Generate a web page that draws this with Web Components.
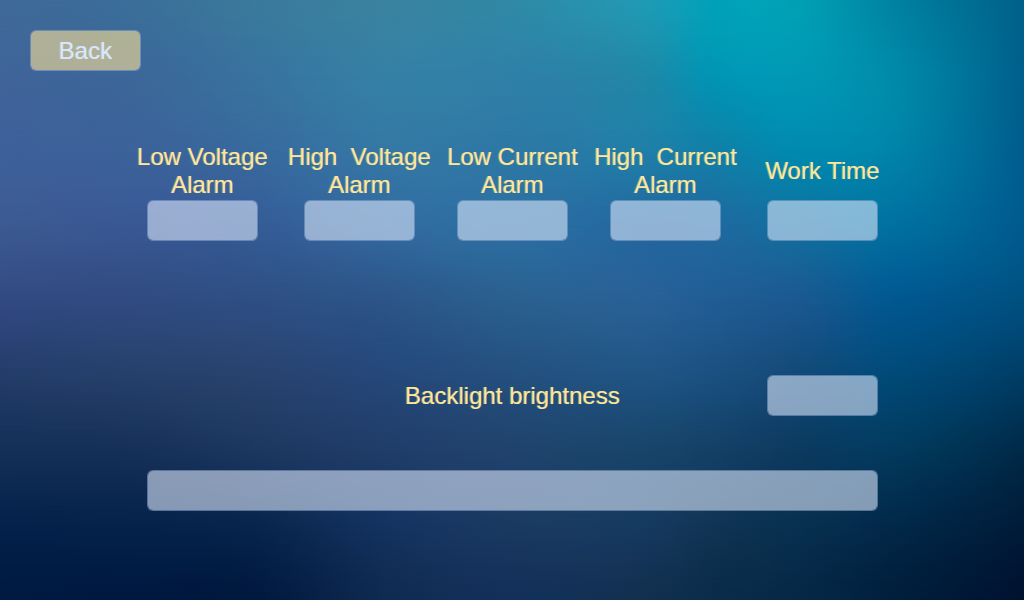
<!DOCTYPE html>
<html lang="en">
<head>
<meta charset="utf-8">
<meta name="viewport" content="width=device-width, initial-scale=1">
<title>Alarm settings</title>
<style>
  html, body { margin: 0; min-height: 100%; }
  body { background: #03204a; font: 24px/28px "Liberation Sans", Arial, sans-serif; color: #ffe699; text-shadow: -1px 0 0 rgba(255, 230, 153, .4); }
</style>
</head>
<body>
<settings-screen>
  <nav-button slot="nav">Back</nav-button>
  <value-field>Low Voltage
Alarm</value-field>
  <value-field>High  Voltage
Alarm</value-field>
  <value-field>Low Current
Alarm</value-field>
  <value-field>High  Current
Alarm</value-field>
  <value-field>Work Time</value-field>
  <brightness-row slot="brightness">Backlight brightness</brightness-row>
  <status-box slot="status" label="Status message"></status-box>
</settings-screen>

<script>
const boxStyle = `
  input, button {
    box-sizing: border-box; display: block; height: 41px; margin: 0; padding: 0 8px;
    border: 1px solid rgba(140, 165, 205, .6); border-radius: 6px;
    background: rgba(218, 230, 250, .6); background-clip: padding-box;
    font: inherit; color: #15305c; outline-offset: 2px;
  }
  input { text-align: center; }
`;

/* Colour mesh: each row is a horizontal gradient, blended into the row above by a mask. */
const meshColumns = [0, 12.5, 25, 37.5, 50, 62.5, 70, 78, 88, 100];
const meshRows = [
  ['3f6a98','3b6e99','3a7a9c','3a82a0','2f8aa5','209ab5','00a2b8','00a0b4','0080a0','006089'],
  ['40649a','3c6799','38739e','3580a5','2f80a8','2088a8','0095b5','0098b5','0088a8','005f8b'],
  ['3e609a','3c629a','386a9e','3478a5','2d78a5','207fa8','1080a8','008ab0','0082a8','005c8e'],
  ['3c5a92','395894','355c96','326a9f','2c6fa2','22689f','1e6aa0','10709f','0070a0','005a8e'],
  ['324a82','304b80','2e4f84','2c5589','2a6090','286196','205d94','1a5990','005890','005080'],
  ['243c6a','26406c','28436f','25487a','24507e','205484','1a5080','124a78','004a78','003d66'],
  ['143059','163058','1c3760','203d69','20436d','18456a','144066','0c3a60','023a5e','002a48'],
  ['04224b','05234b','08264d','143360','1a3a62','163a60','103454','083050','022848','001c3a'],
  ['001a42','001840','02193f','0f2a50','13305a','12304f','0a2c4a','062846','001e3c','001230']
];

/* Catmull-Rom: adds smooth in-between entries to a list of number arrays. */
const refine = (list, parts) => {
  const at = i => list[Math.max(0, Math.min(list.length - 1, i))];
  const out = [];
  for (let i = 0; i < list.length - 1; i++) {
    for (let s = 0; s < parts; s++) {
      const t = s / parts, [a, b, c, d] = [at(i - 1), at(i), at(i + 1), at(i + 2)];
      out.push(b.map((v, k) => v + t / 2 * ((c[k] - a[k])
        + t * (2 * a[k] - 5 * v + 4 * c[k] - d[k])
        + t * t * (3 * v - a[k] - 3 * c[k] + d[k]))));
    }
  }
  out.push(at(list.length - 1));
  return out;
};

customElements.define('aurora-backdrop', class extends HTMLElement {
  constructor() {
    super();
    const points = meshRows.map(row => refine(row.map((hex, k) => [
      meshColumns[k], ...[0, 2, 4].map(n => parseInt(hex.slice(n, n + 2), 16))
    ]), 4));
    const rows = refine(points.map(row => row.flat()), 4);
    const step = 100 / (rows.length - 1);
    const layers = rows.map((row, i) => {
      const stops = [];
      for (let k = 0; k < row.length; k += 4) {
        const [r, g, b] = row.slice(k + 1, k + 4).map(v => Math.max(0, Math.round(v)));
        stops.push(`rgb(${r}, ${g}, ${b}) ${row[k].toFixed(2)}%`);
      }
      const mask = i === 0 ? 'none'
        : `linear-gradient(transparent ${(i - 1) * step}%, #000 ${i * step}%)`;
      return `<div style="background: linear-gradient(90deg, ${stops.join(', ')}); -webkit-mask-image: ${mask}; mask-image: ${mask}"></div>`;
    }).join('');
    this.attachShadow({ mode: 'open' }).innerHTML = `
      <style>
        :host { display: grid; }
        div { grid-area: 1 / 1; }
      </style>${layers}`;
  }
});

customElements.define('nav-button', class extends HTMLElement {
  constructor() {
    super();
    this.attachShadow({ mode: 'open' }).innerHTML = `
      <style>
        :host { display: block; }
        ${boxStyle}
        button { width: 111px; background-color: rgba(252, 225, 150, .6); color: #d9e8ff; text-shadow: -1px 0 0 rgba(217, 232, 255, .4); cursor: pointer; }
      </style>
      <button type="button"><slot></slot></button>`;
  }
});

customElements.define('value-field', class extends HTMLElement {
  constructor() {
    super();
    this.attachShadow({ mode: 'open' }).innerHTML = `
      <style>
        :host { display: grid; grid-template-rows: 56px auto; gap: 1px; justify-items: center; }
        label { align-self: center; white-space: pre; text-align: center; }
        ${boxStyle}
        input { width: 111px; }
      </style>
      <label for="value"><slot></slot></label>
      <input id="value" type="text" inputmode="decimal">`;
  }
});

customElements.define('brightness-row', class extends HTMLElement {
  constructor() {
    super();
    this.attachShadow({ mode: 'open' }).innerHTML = `
      <style>
        :host { display: grid; grid-template-columns: var(--columns); align-items: center; justify-items: center; }
        label { grid-column: 2 / 5; }
        ${boxStyle}
        input { width: 111px; grid-column: 5; }
      </style>
      <label for="level"><slot></slot></label>
      <input id="level" type="text" inputmode="numeric">`;
  }
});

customElements.define('status-box', class extends HTMLElement {
  constructor() {
    super();
    this.attachShadow({ mode: 'open' }).innerHTML = `
      <style>
        :host { display: block; padding: 0 24px; }
        ${boxStyle}
        input { width: 100%; }
      </style>
      <input type="text" readonly>`;
    this.shadowRoot.querySelector('input').setAttribute('aria-label', this.getAttribute('label'));
  }
});

customElements.define('settings-screen', class extends HTMLElement {
  constructor() {
    super();
    this.attachShadow({ mode: 'open' }).innerHTML = `
      <style>
        :host {
          display: grid; min-height: 100vh;
          --columns: 159fr 155fr 151fr 155fr 159fr;
        }
        aurora-backdrop, main { grid-area: 1 / 1; }
        main { position: relative; padding: 30px 0; }
        nav { padding: 0 30px; display: flex; }
        .panel { padding: 72px 122px 0 123px; }
        .fields { display: grid; grid-template-columns: var(--columns); }
        .brightness { padding-top: 134px; }
        .status { padding-top: 54px; }
      </style>
      <aurora-backdrop></aurora-backdrop>
      <main>
        <nav><slot name="nav"></slot></nav>
        <div class="panel">
          <div class="fields"><slot></slot></div>
          <div class="brightness"><slot name="brightness"></slot></div>
          <div class="status"><slot name="status"></slot></div>
        </div>
      </main>`;
  }
});
</script>
</body>
</html>
